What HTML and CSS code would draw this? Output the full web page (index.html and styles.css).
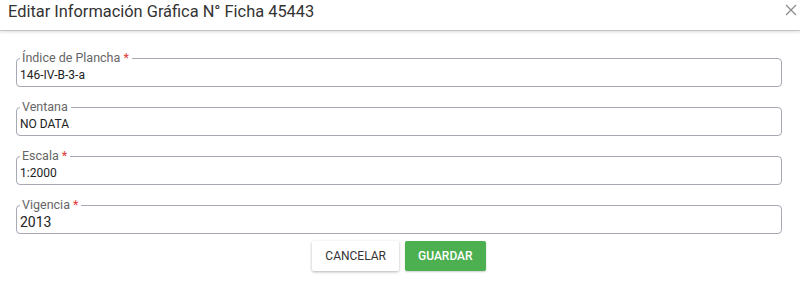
FILE: index.html
```html
<!DOCTYPE html>
<html lang="es">
<head>
<meta charset="utf-8">
<title>Editar Información Gráfica</title>
<link rel="stylesheet" href="styles.css">
</head>
<body>
<div class="dialog">
  <header class="dialog-header">
    <h1 class="dialog-title">Editar Información Gráfica N° Ficha 45443</h1>
    <button class="close-btn" aria-label="Cerrar">
      <svg width="12" height="12" viewBox="0 0 12 12"><path d="M1 1L11 11M11 1L1 11" stroke="#8a8a8a" stroke-width="1.2" fill="none"/></svg>
    </button>
  </header>
  <form class="dialog-body">
    <fieldset class="field">
      <legend class="field-label">Índice de Plancha <span class="req">*</span></legend>
      <div class="field-value">146-IV-B-3-a</div>
    </fieldset>
    <fieldset class="field">
      <legend class="field-label">Ventana</legend>
      <div class="field-value">NO DATA</div>
    </fieldset>
    <fieldset class="field">
      <legend class="field-label">Escala <span class="req">*</span></legend>
      <div class="field-value">1:2000</div>
    </fieldset>
    <fieldset class="field">
      <legend class="field-label">Vigencia <span class="req">*</span></legend>
      <div class="field-value big">2013</div>
    </fieldset>
    <div class="actions">
      <button type="button" class="btn btn-cancel">CANCELAR</button>
      <button type="button" class="btn btn-save">GUARDAR</button>
    </div>
  </form>
</div>
</body>
</html>
```
FILE: styles.css
```css
html, body {
  margin: 0;
  padding: 0;
  background: #ffffff;
  font-family: Roboto, "Liberation Sans", Arial, sans-serif;
}
.dialog {
  width: 800px;
  height: 286px;
  background: #fff;
}
.dialog-header {
  height: 30px;
  display: flex;
  align-items: flex-start;
  justify-content: space-between;
  border-bottom: 1px solid #c4c4c4;
  box-shadow: 0 1px 3px rgba(0,0,0,0.15);
}
.dialog-title {
  margin: 0;
  padding: 1px 0 0 8px;
  font-size: 16.4px;
  font-weight: 400;
  line-height: 22px;
  color: #333;
}
.close-btn {
  border: none;
  background: none;
  padding: 0;
  margin: 4px 3px 0 0;
  width: 12px;
  height: 12px;
  display: flex;
  cursor: pointer;
}
.dialog-body {
  padding: 20px 18px 0 16px;
  display: flex;
  flex-direction: column;
  gap: 13px;
}
.field {
  margin: 0;
  padding: 0 3px 3px;
  border: 1px solid #a7a9b5;
  border-radius: 4px;
  min-width: 0;
}
.field-label {
  padding: 0 3px 0 2px;
  font-size: 12.5px;
  line-height: 14px;
  color: #666;
}
.req {
  color: #e53935;
}
.field-value {
  font-size: 12px;
  line-height: 16px;
  padding-top: 2px;
  color: #222;
  height: 16px;
}
.field-value.big {
  font-size: 14px;
}
.actions {
  display: flex;
  justify-content: center;
  gap: 6px;
  margin-top: -6px;
}
.btn {
  height: 30px;
  border: none;
  border-radius: 2px;
  font-family: Roboto, "Liberation Sans", Arial, sans-serif;
  font-size: 12px;
  padding: 0 13px;
  cursor: pointer;
}
.btn-cancel {
  background: #fff;
  color: #333;
  box-shadow: 0 1px 3px rgba(0,0,0,0.3);
}
.btn-save {
  background: #4caf50;
  color: #fff;
  font-weight: 500;
  box-shadow: 0 1px 2px rgba(0,0,0,0.2);
}
```
